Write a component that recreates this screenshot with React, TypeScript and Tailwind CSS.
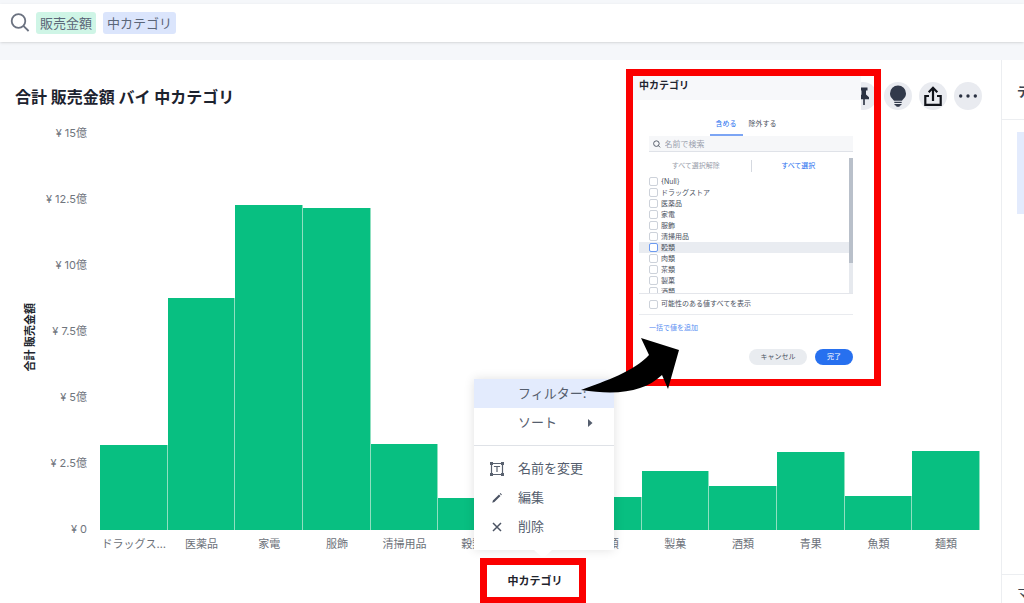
import { useState } from "react";

type Bar = { name: string; value: number };

const bars: Bar[] = [
  { name: "ドラッグス…", value: 85 },
  { name: "医薬品", value: 232 },
  { name: "家電", value: 325 },
  { name: "服飾", value: 322 },
  { name: "清掃用品", value: 86 },
  { name: "穀類", value: 32 },
  { name: "肉類", value: 40 },
  { name: "茶類", value: 33 },
  { name: "製菓", value: 59 },
  { name: "酒類", value: 44 },
  { name: "青果", value: 78 },
  { name: "魚類", value: 34 },
  { name: "麺類", value: 79 },
];

const ticks = ["¥ 15億", "¥ 12.5億", "¥ 10億", "¥ 7.5億", "¥ 5億", "¥ 2.5億", "¥ 0"];

const options = [
  "{Null}",
  "ドラッグストア",
  "医薬品",
  "家電",
  "服飾",
  "清掃用品",
  "穀類",
  "肉類",
  "茶類",
  "製菓",
  "酒類",
];

const box =
  "size-[9px] shrink-0 appearance-none rounded-[2px] border bg-white checked:bg-[#2770ef]";

function SearchBar() {
  return (
    <header className="mt-1 flex h-[38px] items-center bg-white pl-2 shadow-sm">
      <button type="button" aria-label="検索" className="mr-1 flex size-6 items-center justify-center">
        <svg viewBox="0 0 20 20" className="size-5" fill="none" stroke="#6b7280" strokeWidth="1.8">
          <circle cx="8.5" cy="8" r="6.8" />
          <path d="M13.4 12.9 18.6 18" />
        </svg>
      </button>
      <div className="flex gap-[7px] text-[13px] leading-[22px] text-[#5b6678]">
        <span className="rounded-[3px] bg-[#cff5e6] px-1">販売金額</span>
        <span className="rounded-[3px] bg-[#dbe5fc] px-1">中カテゴリ</span>
      </div>
    </header>
  );
}

const round = "flex size-7 items-center justify-center rounded-full bg-[#e9ebf0]";

function Toolbar() {
  return (
    <div className="flex gap-[7px]">
      <button type="button" aria-label="ピン留め" className={round}>
        <svg viewBox="0 0 16 24" className="h-6 w-4" fill="#2b3242">
          <path d="M5 3.500h7.500v3H11v4l3 2.800v2H4v-2l2.500-2.800v-4H5zM8.200 15.300h1.600V21H8.200z" />
        </svg>
      </button>
      <button type="button" aria-label="インサイト" className={round}>
        <svg viewBox="0 0 20 24" className="h-6 w-5" fill="#323a4b">
          <path d="M10 1.500a8 8 0 0 0-8 8c0 3.800 2.600 5.300 4 7.300h8c1.400-2 4-3.500 4-7.300a8 8 0 0 0-8-8zM6.300 17.700h7.400v1.300H6.300zM6.300 20h7.400c-.3 1-1 1.500-1.700 1.500l-.6 1.200H8.600L8 21.500c-.8 0-1.400-.5-1.700-1.500z" />
        </svg>
      </button>
      <button type="button" aria-label="共有" className={round}>
        <svg viewBox="0 0 20 22" className="h-[22px] w-5" fill="none" stroke="#10131a" strokeWidth="2.200">
          <path d="M6 11H2.300v8.800h15.400V11H14M10 16V3M5.700 7.200 10 2.800l4.300 4.400" />
        </svg>
      </button>
      <button type="button" aria-label="その他" className={round}>
        <svg viewBox="0 0 20 4" className="h-1 w-5" fill="#2b3242">
          <circle cx="2.700" cy="2" r="1.700" />
          <circle cx="10" cy="2" r="1.700" />
          <circle cx="17.300" cy="2" r="1.700" />
        </svg>
      </button>
    </div>
  );
}

function Chart() {
  return (
    <div className="mt-[15px] flex pr-[21px]">
      <div className="flex w-10 items-center justify-center">
        <h2 className="mt-3 rotate-180 pr-5 text-[11px] leading-4 font-bold whitespace-nowrap text-[#20242c] [writing-mode:vertical-rl]">
          <span className="[text-orientation:sideways]">合計 販売金額</span>
        </h2>
      </div>
      <div className="flex w-[60px] flex-col pr-[13px] text-right text-[11px] text-[#70757d]">
        {ticks.map((t) => (
          <span key={t} className="h-[66px] leading-4 whitespace-nowrap last:h-[17px]">
            {t}
          </span>
        ))}
      </div>
      <div className="flex min-w-0 flex-1 items-end">
        {bars.map((b) => (
          <div key={b.name} className="flex min-w-0 flex-1 flex-col">
            <div className="border-r border-[#8fe0c0] bg-[#08bf81]" style={{ height: b.value }} />
            <span className="-mb-4 h-6 pt-1 text-center text-[11px] leading-5 whitespace-nowrap text-[#6c7179]">
              {b.name}
            </span>
          </div>
        ))}
      </div>
    </div>
  );
}

function FilterDialog() {
  const [tab, setTab] = useState(0);
  const on = "border-[#7ca5f4] text-[#2770ef]";
  const off = "border-transparent";
  return (
    <section
      aria-label="中カテゴリ フィルター"
      className="absolute top-[69px] left-[626px] border-[7px] border-[#fb0000] pr-[13px]"
    >
      <div className="h-[303px] w-[228px] bg-white text-[7px] text-[#4c5362]">
        <h2 className="h-6 bg-[#f7f8fa] pl-1.5 text-[10px] leading-[18px] font-bold text-[#1f2530]">
          中カテゴリ
        </h2>
        <div className="flex h-9 items-end justify-center pr-0.5">
          <button
            type="button"
            onClick={() => setTab(0)}
            className={`h-[22px] border-b-2 px-1.5 ${tab === 0 ? on : off}`}
          >
            含める
          </button>
          <button
            type="button"
            onClick={() => setTab(1)}
            className={`h-[22px] border-b-2 px-1.5 ${tab === 1 ? on : off}`}
          >
            除外する
          </button>
        </div>
        <div className="mr-2 ml-1.5">
          <label className="ml-2.5 flex h-4 items-center gap-1 border-b border-[#dfe2e8] bg-[#f6f7f9] pl-1">
            <svg viewBox="0 0 10 10" className="size-2" fill="none" stroke="#555c69" strokeWidth="1.300">
              <circle cx="4.500" cy="4.500" r="3.700" />
              <path d="m7 7 2.500 2.500" />
            </svg>
            <input
              aria-label="名前で検索"
              placeholder="名前で検索"
              className="w-full bg-transparent text-[8px] outline-none placeholder:text-[#9aa1ad]"
            />
          </label>
          <div className="mt-1.5 flex h-[136px] border-b border-[#e4e6eb]">
            <div className="min-w-0 flex-1 overflow-hidden">
              <div className="mr-1 ml-2.5 flex h-[18px] items-center pb-0.5">
                <button type="button" className="flex-1 pr-2 text-[#9ba1ac]">すべて選択解除</button>
                <span className="h-3 w-px bg-[#d5d9e0]" />
                <button type="button" className="flex-1 text-[#2770ef]">すべて選択</button>
              </div>
              {options.map((o) => (
                <label
                  key={o}
                  className={`flex h-[11px] items-center gap-[3px] pl-2.5 ${o === "穀類" ? "bg-[#e9ecf1]" : ""}`}
                >
                  <input
                    type="checkbox"
                    className={`${box} ${o === "穀類" ? "border-[#6c9af0]" : "border-[#cdd2da]"}`}
                  />
                  <span className="leading-[11px]">{o}</span>
                </label>
              ))}
            </div>
            <div className="w-1 bg-[#e6e9ee]">
              <div className="h-[105px] bg-[#b9c0ca]" />
            </div>
          </div>
          <label className="flex h-[21px] items-center gap-[3px] border-b border-[#e9ebef] pl-2.5">
            <input type="checkbox" className={`${box} border-[#cdd2da]`} />
            可能性のある値すべてを表示
          </label>
          <a href="#bulk" className="ml-2.5 block leading-[26px] text-[#5b8ff2]">
            一括で値を追加
          </a>
          <div className="mt-2 flex justify-end gap-2">
            <button type="button" className="h-4 w-[58px] rounded-full bg-[#e9ecf0]">キャンセル</button>
            <button type="button" className="h-4 w-[38px] rounded-full bg-[#2770ef] text-white">完了</button>
          </div>
        </div>
      </div>
    </section>
  );
}

const item = "flex h-[29px] w-full items-center pt-px text-left";
const slot = "flex w-11 items-center justify-center";

function ContextMenu() {
  return (
    <div
      role="menu"
      className="absolute top-[379px] left-[474px] h-[171px] w-[140px] bg-white text-[13px] text-[#555e6e] shadow-[0_0_10px_rgba(0,0,0,0.12)]"
    >
      <button type="button" role="menuitem" className={`${item} bg-[#e3ebfd]`}>
        <span className={slot} />
        フィルター:
      </button>
      <button type="button" role="menuitem" className={item}>
        <span className={slot} />
        ソート
        <svg viewBox="0 0 5 8" className="mr-[21px] ml-auto h-2 w-[5px]" fill="#555e6e">
          <path d="M0 0 4.500 4 0 8z" />
        </svg>
      </button>
      <hr className="my-2 border-[#dfe2e7]" />
      <button type="button" role="menuitem" className={item}>
        <span className={slot}>
          <svg viewBox="0 0 16 16" className="ml-0.5 size-4" fill="none" stroke="#59616f">
            <path d="M3 2.500h10M3 13.500h10M2.500 3v10M13.500 3v10M5.500 6V5.500h5V6M8 5.500v5.500" strokeWidth="1.200" />
            <path d="M1 1h3v3H1zM12 1h3v3h-3zM1 12h3v3H1zM12 12h3v3h-3z" fill="#59616f" stroke="none" />
          </svg>
        </span>
        名前を変更
      </button>
      <button type="button" role="menuitem" className={item}>
        <span className={slot}>
          <svg viewBox="0 0 12 12" className="ml-0.5 size-3" fill="#4b5363">
            <path d="m1.300 10.700.6-2.200L8 2.500l1.500 1.500-6.100 6.100zM8.700 1.800l.7-.7 1.500 1.500-.7.700z" />
          </svg>
        </span>
        編集
      </button>
      <button type="button" role="menuitem" className={item}>
        <span className={slot}>
          <svg viewBox="0 0 12 12" className="ml-0.5 size-3" stroke="#4b5363" strokeWidth="1.500">
            <path d="m2 2 8 8M10 2l-8 8" />
          </svg>
        </span>
        削除
      </button>
      <svg viewBox="0 0 18 7" className="absolute top-full left-[60px] h-[7px] w-[18px]" fill="#fff">
        <path d="M0 0h18l-7 6.500H7z" />
      </svg>
    </div>
  );
}

export default function App() {
  return (
    <div
      lang="ja"
      className="relative flex min-h-screen flex-col overflow-hidden bg-[#f5f7fa] font-['Inter','Noto_Sans_CJK_JP',sans-serif]"
    >
      <SearchBar />
      <div className="mt-[18px] flex flex-1 bg-white">
        <main className="flex min-w-0 flex-1 flex-col">
          <div className="flex items-center justify-between pt-[22px] pr-[19px] pl-[15px]">
            <h1 className="pt-0.5 text-[16px] leading-[26px] font-bold text-[#1d232f]">合計 販売金額 バイ 中カテゴリ</h1>
            <Toolbar />
          </div>
          <Chart />
        </main>
        <aside className="flex w-[23px] flex-col overflow-hidden border-l border-[#eceef1] text-[13px] whitespace-nowrap text-[#3c4350]">
          <h2 className="h-[60px] border-b border-[#eceef1] pl-[15px] leading-[62px] font-bold">データ</h2>
          <div className="mt-3 ml-[15px] h-[82px] bg-[#e3ebfd]" />
          <div className="mt-auto h-[29px] border-t border-[#eceef1] pl-[15px] leading-9">マイ</div>
        </aside>
      </div>
      <button
        type="button"
        className="absolute top-[558px] left-[480px] h-[46px] w-[106px] border-[7px] border-[#fb0000] bg-white pl-1 text-[11px] font-bold text-[#1f242d]"
      >
        中カテゴリ
      </button>
      <ContextMenu />
      <FilterDialog />
      <svg viewBox="0 0 100 60" className="absolute top-[335px] left-[580px] h-[60px] w-[100px]">
        <path d="M1 55C26 46 54 36 69 20L61 3l38 12-11 39-6-14C65 56 40 61 1 55z" />
      </svg>
    </div>
  );
}
